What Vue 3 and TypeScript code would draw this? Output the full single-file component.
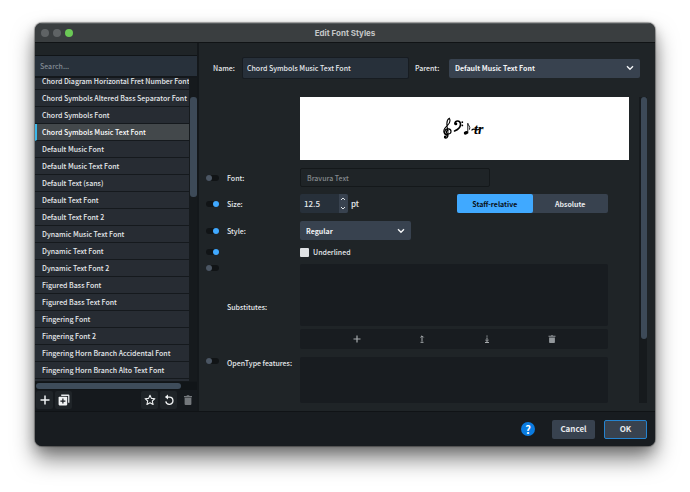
<script setup lang="ts">
import { ref } from 'vue'

const fontStyles: string[] = [
  'Chord Diagram Horizontal Fret Number Font',
  'Chord Symbols Altered Bass Separator Font',
  'Chord Symbols Font',
  'Chord Symbols Music Text Font',
  'Default Music Font',
  'Default Music Text Font',
  'Default Text (sans)',
  'Default Text Font',
  'Default Text Font 2',
  'Dynamic Music Text Font',
  'Dynamic Text Font',
  'Dynamic Text Font 2',
  'Figured Bass Font',
  'Figured Bass Text Font',
  'Fingering Font',
  'Fingering Font 2',
  'Fingering Horn Branch Accidental Font',
  'Fingering Horn Branch Alto Text Font',
]

const selected = ref('Chord Symbols Music Text Font')
const name = ref('Chord Symbols Music Text Font')
const search = ref('')
const family = ref('Bravura Text')
const size = ref('12.5')
const sizeMode = ref<'relative' | 'absolute'>('relative')
const underlined = ref(false)
const overrides = ref({
  font: false,
  size: true,
  style: true,
  underlined: true,
  substitutes: false,
  features: false,
})

function step(amount: number) {
  size.value = (parseFloat(size.value) + amount).toFixed(1)
}
</script>

<template>
  <div class="desktop">
    <section class="window" aria-labelledby="window-title">
      <header class="titlebar">
        <div class="lights"><i></i><i></i><i class="zoom"></i></div>
        <h1 id="window-title">Edit Font Styles</h1>
      </header>

      <div class="body">
        <aside class="sidebar">
          <input v-model="search" class="search" type="text" placeholder="Search..." aria-label="Search" />
          <div class="list">
            <ul>
              <li v-for="item in fontStyles" :key="item">
                <button type="button" :class="{ active: item === selected }" @click="selected = item">{{ item }}</button>
              </li>
            </ul>
            <div class="list-track"><div class="list-thumb"></div></div>
          </div>
          <div class="h-track"><div class="h-thumb"></div></div>
          <div class="tools">
            <button type="button" aria-label="New">
              <svg viewBox="0 0 12 12"><path d="M6 1.5v9M1.5 6h9" stroke="#f1f3f4" stroke-width="1.5" /></svg>
            </button>
            <button type="button" aria-label="Duplicate">
              <svg viewBox="0 0 12 12">
                <path d="M3.2 .6h7.2a1 1 0 0 1 1 1v7.2h-1.3V1.9H3.2z" fill="#e4e7e9" />
                <rect x=".6" y="2.8" width="8.6" height="8.6" rx=".8" fill="#f1f3f4" />
                <path d="M4.9 4.6v5M2.4 7.1h5" stroke="#15191d" stroke-width="1.2" />
              </svg>
            </button>
            <span class="spacer"></span>
            <button type="button" aria-label="Save as default">
              <svg viewBox="0 0 12 12">
                <path d="M6 1.2l1.4 3.2 3.5.3-2.6 2.3.8 3.5L6 8.7l-3.1 1.8.8-3.5L1.1 4.7l3.5-.3z" fill="none" stroke="#f1f3f4" stroke-width="1.1" stroke-linejoin="round" />
              </svg>
            </button>
            <button type="button" aria-label="Revert">
              <svg viewBox="0 0 12 12">
                <path d="M4.3 3.1h2.2a3.6 3.6 0 1 1-3.7 4.3" fill="none" stroke="#f1f3f4" stroke-width="1.3" />
                <path d="M5 .4v5.2L1.9 3z" fill="#f1f3f4" />
              </svg>
            </button>
            <button type="button" class="flat" aria-label="Delete" disabled>
              <svg viewBox="0 0 12 12">
                <path d="M2 2.1h2.4l.6-.8h2l.6.8H10v1.1H2zM2.6 3.8h6.8v6.1a1 1 0 0 1-1 1H3.6a1 1 0 0 1-1-1z" fill="#74787c" />
              </svg>
            </button>
          </div>
        </aside>

        <main class="main">
          <div class="head">
            <label for="style-name">Name:</label>
            <input id="style-name" v-model="name" class="field" type="text" />
            <label for="style-parent">Parent:</label>
            <div class="select parent">
              <select id="style-parent"><option>Default Music Text Font</option></select>
              <svg viewBox="0 0 8 6"><path d="M1 1.2l3 3 3-3" /></svg>
            </div>
          </div>

          <div class="scroll">
            <div class="content">
              <div class="preview">
                <svg class="notation" viewBox="0 0 44 24">
                  <g fill="none" stroke="#000" stroke-linecap="round">
                    <path d="M4.6 19.5c-.8 2.6-3.7 1.8-3 .2M4.9 13.4c-2-.1-2.3 3.2.3 3.6 3.4.3 4-4.9.2-5.2-4.1-.2-5.5 5.5-1 6.5" stroke-width="1.2" />
                    <path d="M4.6 19.8c1.6-.9-.4-8-.7-12.1C3.7 4.5 5 2 6.3 1.3c1.4 2.5.4 5-1.8 7-2.4 2.1-4.2 4-3.6 6.7.5 2 2 2.8 4.1 2.9" stroke-width="1.1" />
                    <path d="M12 6.6c-.5-3.3 5.8-4 5.5 1-.2 3-2.5 5-6 6.3" stroke-width="1.6" />
                    <path d="M24.8 16V6.300c.2 2.200 3 3 1.800 6" stroke-width=".9" />
                  </g>
                  <circle cx="12.800" cy="6.800" r="1.500" />
                  <circle cx="2.300" cy="19.800" r="1.300" />
                  <circle cx="19.300" cy="5.200" r=".9" />
                  <circle cx="19.300" cy="8.400" r=".9" />
                  <ellipse cx="23" cy="15.800" rx="2.300" ry="1.700" transform="rotate(-25 23 15.800)" />
                  <path d="M28.500 13.300c1.500-1.600 2.600-1.600 4-.9s2.600.6 4.200-.8" fill="none" stroke="#000" stroke-width="1.200" />
                  <text x="31" y="17">tr</text>
                </svg>
              </div>

              <div class="row font-row">
                <input v-model="overrides.font" class="toggle" type="checkbox" aria-label="Override font" />
                <label for="font-family">Font:</label>
                <input id="font-family" v-model="family" class="family" type="text" disabled />
              </div>

              <div class="row size-row">
                <input v-model="overrides.size" class="toggle" type="checkbox" aria-label="Override size" />
                <label for="font-size">Size:</label>
                <div class="control">
                  <div class="spin">
                    <input id="font-size" v-model="size" type="text" />
                    <div class="steps">
                      <button type="button" aria-label="Increase" @click="step(0.5)"><svg viewBox="0 0 8 6"><path d="M2 4l2-2 2 2" /></svg></button>
                      <button type="button" aria-label="Decrease" @click="step(-0.5)"><svg viewBox="0 0 8 6"><path d="M2 2l2 2 2-2" /></svg></button>
                    </div>
                  </div>
                  <span class="unit">pt</span>
                  <div class="segmented">
                    <button type="button" :class="{ on: sizeMode === 'relative' }" @click="sizeMode = 'relative'">Staff-relative</button>
                    <button type="button" :class="{ on: sizeMode === 'absolute' }" @click="sizeMode = 'absolute'">Absolute</button>
                  </div>
                </div>
              </div>

              <div class="row style-row">
                <input v-model="overrides.style" class="toggle" type="checkbox" aria-label="Override style" />
                <label for="font-style">Style:</label>
                <div class="select style">
                  <select id="font-style"><option>Regular</option></select>
                  <svg viewBox="0 0 8 6"><path d="M1 1.2l3 3 3-3" /></svg>
                </div>
              </div>

              <div class="row underline-row">
                <input v-model="overrides.underlined" class="toggle" type="checkbox" aria-label="Override underline" />
                <span></span>
                <label class="check"><input v-model="underlined" type="checkbox" />Underlined</label>
              </div>

              <div class="row tall">
                <input v-model="overrides.substitutes" class="toggle" type="checkbox" aria-label="Override substitutes" />
                <span class="middle">Substitutes:</span>
                <div class="stack">
                  <div class="well substitutes"></div>
                  <div class="well actions">
                    <button type="button" aria-label="Add substitute" disabled>
                      <svg viewBox="0 0 10 10"><path d="M5 1.5v7M1.5 5h7" stroke="#a6aaad" stroke-width="1.2" /></svg>
                    </button>
                    <button type="button" aria-label="Move up" disabled>
                      <svg viewBox="0 0 10 10"><path d="M5 2v5.5M3.500 8.300h3M3.400 3.400L5 1.800l1.600 1.600" fill="none" stroke="#a6aaad" /></svg>
                    </button>
                    <button type="button" aria-label="Move down" disabled>
                      <svg viewBox="0 0 10 10"><path d="M5 1.500v1.200M5 3.500V7M3.400 6L5 7.500 6.600 6M3 8.500h4" fill="none" stroke="#a6aaad" /></svg>
                    </button>
                    <button type="button" aria-label="Remove substitute" disabled>
                      <svg viewBox="0 0 10 10"><path d="M1.500 1.800h2.300l.5-.6h1.400l.5.6h2.300v1h-7zM2.100 3.400h5.800v4.800a.8.8 0 0 1-.8.8H2.900a.8.8 0 0 1-.8-.8z" fill="#92979b" /></svg>
                    </button>
                  </div>
                </div>
              </div>

              <div class="row tall features-row">
                <input v-model="overrides.features" class="toggle" type="checkbox" aria-label="Override OpenType features" />
                <span>OpenType features:</span>
                <div class="well"></div>
              </div>
            </div>
            <div class="v-track"><div class="v-thumb"></div></div>
          </div>
        </main>
      </div>

      <footer class="footer">
        <button type="button" class="help" aria-label="Help">?</button>
        <button type="button" class="push">Cancel</button>
        <button type="button" class="push primary">OK</button>
      </footer>
    </section>
  </div>
</template>

<style>
body {
  margin: 0;
  background: #fff;
}
</style>

<style scoped>
* {
  box-sizing: border-box;
}

.desktop {
  display: flex;
  min-height: 100vh;
  padding: 23px 35px 46px;
  font: 500 7px/12px 'Noto Sans CJK SC', 'Noto Sans', sans-serif;
  color: #e6e9ec;
}

button,
input,
select {
  margin: 0;
  padding: 0;
  border: 0;
  border-radius: 0;
  outline: 0;
  background: none;
  color: inherit;
  font: inherit;
  appearance: none;
}

svg {
  display: block;
}

.window {
  display: flex;
  flex: 1;
  flex-direction: column;
  min-width: 0;
  overflow: hidden;
  border-radius: 7px;
  background: #1f2427;
  box-shadow: 0 0 1px 1px rgba(0, 0, 0, 0.35), 0 13px 22px rgba(0, 0, 0, 0.5), 0 4px 12px rgba(0, 0, 0, 0.2);
}

.titlebar {
  display: grid;
  grid-template-columns: 1fr auto 1fr;
  align-items: center;
  height: 20px;
  padding: 0 6px;
  border-top: 1px solid #555a5c;
  border-bottom: 1px solid #101315;
  background: #3a3e40;
}

.titlebar h1 {
  margin: 0;
  color: #c4c6c7;
  font: 700 8px/12px Inter, sans-serif;
}

.lights {
  display: flex;
  gap: 4px;
}

.lights i {
  width: 8px;
  height: 8px;
  border-radius: 50%;
  background: #5f6365;
}

.lights .zoom {
  background: #6bc956;
}

.body {
  display: flex;
  flex: 1;
  min-height: 0;
}

.sidebar {
  display: flex;
  flex: none;
  flex-direction: column;
  width: 164px;
  padding-top: 12px;
  border-right: 2px solid #14181b;
}

.search {
  flex: none;
  height: 23px;
  padding: 0 5px;
  border-top: 1px solid #101417;
  border-bottom: 2px solid #14181c;
  background: #28313b;
}

.search::placeholder {
  color: #818a93;
  opacity: 1;
}

.list {
  display: flex;
  flex: 1 1 0;
  min-height: 0;
  overflow: hidden;
  background: #161a1d;
}

.list ul {
  flex: 1;
  min-width: 0;
  margin: -5px 0 0;
  padding: 0;
  overflow: hidden;
  background: #272c33;
  list-style: none;
}

.list li button {
  display: block;
  width: 100%;
  height: 17px;
  padding-left: 7px;
  overflow: hidden;
  border-bottom: 1px solid #15191d;
  line-height: 16px;
  text-align: left;
  white-space: nowrap;
}

.list li .active {
  padding-left: 5px;
  border-left: 2px solid #3cb8ea;
  background: #43484b;
  color: #fff;
}

.list-track {
  width: 8px;
  padding: 19px 0 0 1px;
}

.list-thumb {
  height: 100px;
  border-radius: 3px;
  background: #3d4a58;
}

.h-track {
  flex: none;
  height: 9px;
  padding: 1px 16px 1px 1px;
  border-top: 1px solid #14181b;
  background: #111518;
}

.h-thumb {
  height: 6px;
  border-radius: 3px;
  background: #3e4c5a;
}

.tools {
  display: flex;
  flex: none;
  gap: 2px;
  height: 21px;
  padding: 1px 1px 2px 1px;
  background: #15191d;
}

.tools button {
  display: grid;
  place-items: center;
  width: 17px;
  height: 18px;
  border-radius: 2px;
  background: #1f2428;
}

.tools .flat {
  background: none;
}

.tools svg {
  width: 12px;
  height: 12px;
}

.spacer {
  flex: 1;
}

.main {
  display: flex;
  flex: 1;
  flex-direction: column;
  min-width: 0;
  padding: 14px 8px 8px 6px;
}

.head {
  display: grid;
  grid-template-columns: 23px minmax(0, 167fr) 28px minmax(0, 191fr);
  align-items: center;
  height: 22px;
  margin-bottom: 18px;
  padding: 0 7px 0 8px;
  gap: 6px;
}

.field {
  height: 22px;
  padding: 0 4px;
  border: 1px solid #171c21;
  border-radius: 2px;
  background: #27303a;
}

.select {
  display: grid;
  align-items: center;
  height: 19px;
  border-radius: 2px;
  background: #38424f;
  color: #f1f3f5;
  font-weight: 700;
}

.select select {
  grid-area: 1 / 1;
  width: 100%;
  height: 19px;
  padding: 0 20px 0 6px;
}

.select svg {
  grid-area: 1 / 1;
  justify-self: end;
  width: 8px;
  height: 6px;
  margin-right: 6px;
  fill: none;
  stroke: #f1f3f5;
  stroke-width: 1.4;
  pointer-events: none;
}

.style {
  width: 111px;
}

.scroll {
  display: flex;
  flex: 1;
  gap: 10px;
  min-height: 0;
}

.content {
  display: flex;
  flex: 1;
  flex-direction: column;
  min-width: 0;
}

.preview {
  display: grid;
  place-items: center;
  height: 63px;
  margin: 0 0 8px 95px;
  background: #fff;
}

.notation {
  width: 44px;
  height: 24px;
}

.notation text {
  font: italic 700 14px 'Liberation Serif', serif;
}

.row {
  display: grid;
  grid-template-columns: 22px 73px minmax(0, 1fr);
  align-items: center;
  padding-right: 21px;
}

.toggle {
  display: flex;
  align-items: center;
  width: 13px;
  height: 6px;
  margin-left: 1px;
  border-radius: 3px;
  background: #111416;
}

.toggle::before {
  width: 6px;
  height: 6px;
  border-radius: 50%;
  background: #4b5663;
  content: '';
}

.toggle:checked {
  justify-content: flex-end;
}

.toggle:checked::before {
  background: #40a9ff;
}

.family {
  width: 190px;
  height: 19px;
  padding: 0 6px;
  border: 1px solid #14181a;
  border-radius: 2px;
  color: #858a8e;
}

.size-row {
  margin-top: 7px;
}

.control {
  display: flex;
  align-items: center;
}

.spin {
  display: flex;
  width: 48px;
  height: 19px;
  overflow: hidden;
  border-radius: 2px;
  background: #27303a;
}

.spin input {
  flex: 1;
  min-width: 0;
  padding-left: 4px;
}

.steps {
  display: grid;
  width: 9px;
  background: #38424f;
}

.steps svg {
  width: 8px;
  height: 6px;
  fill: none;
  stroke: #dfe3e6;
}

.unit {
  margin-left: 3px;
}

.spin input,
.unit {
  font-size: 8px;
}

.segmented {
  display: flex;
  width: 151px;
  height: 19px;
  margin-left: auto;
  border-radius: 2px;
  background: #38424f;
  font-weight: 700;
}

.segmented button {
  flex: 1;
  border-radius: 2px;
}

.segmented .on {
  background: #40a9ff;
  color: #081018;
}

.style-row {
  margin-top: 8px;
}

.underline-row {
  height: 12px;
  margin: 6px 0 6px;
}

.check {
  display: flex;
  align-items: center;
  gap: 4px;
}

.check input {
  width: 9px;
  height: 9px;
  border-radius: 1px;
  background: #dfe2e4;
}

.check input:checked {
  background: #40a9ff;
}

.tall {
  align-items: start;
}

.tall .toggle {
  margin-top: 1px;
}

.middle {
  align-self: center;
}

.stack {
  display: grid;
  gap: 3px;
}

.well {
  border-radius: 2px;
  background: #181c20;
}

.substitutes {
  height: 62px;
}

.actions {
  display: flex;
  justify-content: space-around;
  align-items: center;
  height: 20px;
  padding: 0 24px;
}

.actions svg {
  width: 10px;
  height: 10px;
}

.features-row {
  flex: 1;
  margin-top: 8px;
}

.features-row .well {
  height: 100%;
}

.v-track {
  width: 8px;
  padding-left: 2px;
  background: #161a1d;
}

.v-thumb {
  height: 79%;
  border-radius: 3px;
  background: #3d4a58;
}

.footer {
  display: flex;
  justify-content: flex-end;
  align-items: center;
  height: 35px;
  padding-right: 8px;
  border-top: 1px solid #101316;
  background: #181c20;
}

.help {
  width: 14px;
  height: 14px;
  margin-right: 17px;
  border-radius: 50%;
  background: #0a7be0;
  color: #fff;
  font-weight: 700;
  font-size: 11px;
  line-height: 14px;
}

.push {
  width: 43px;
  height: 19px;
  border-radius: 2px;
  background: #38424f;
  font-size: 8px;
  font-weight: 700;
}

.primary {
  margin-left: 9px;
  border: 1px solid #2583cf;
}
</style>
